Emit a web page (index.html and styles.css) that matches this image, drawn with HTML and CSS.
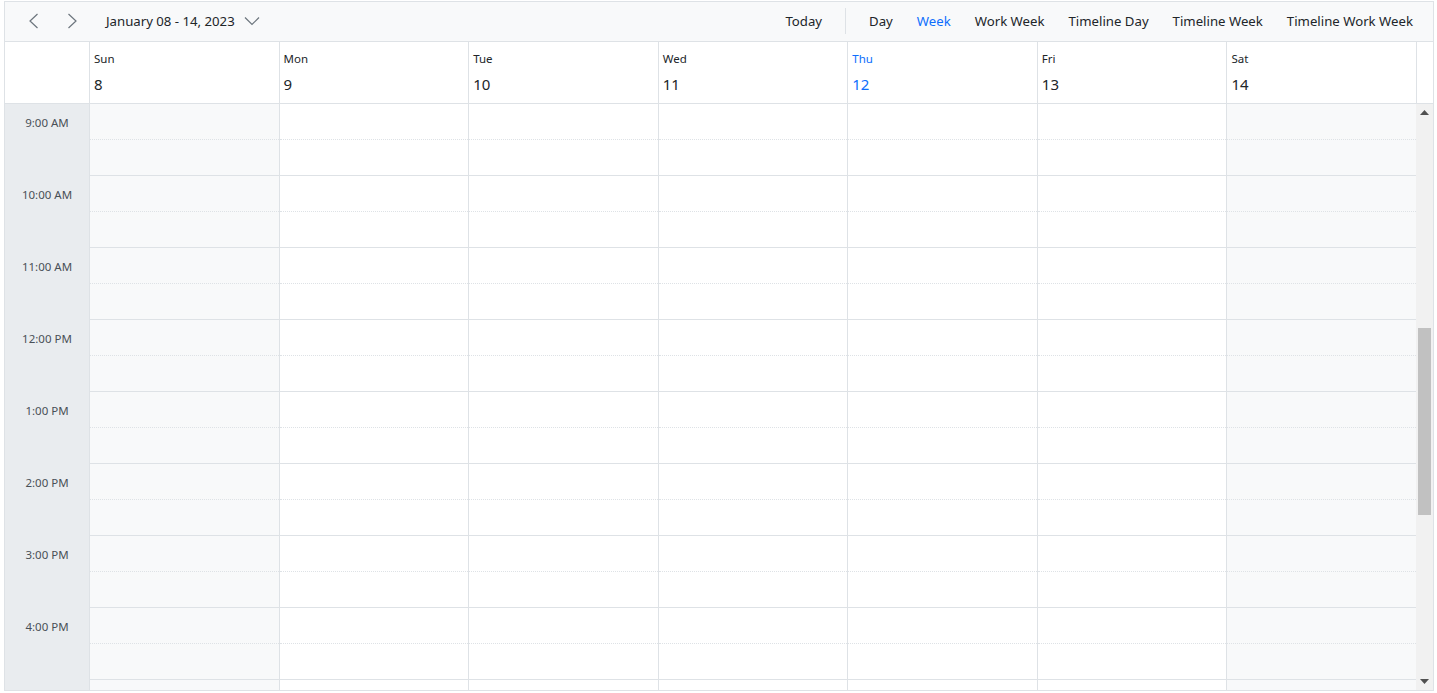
FILE: index.html
```html
<!DOCTYPE html>
<html lang="en">
<head>
<meta charset="utf-8">
<title>Scheduler</title>
<link rel="stylesheet" href="styles.css">
</head>
<body>
<div class="scheduler">
  <div class="toolbar">
    <div class="tb-left">
      <button class="icon-btn" aria-label="Previous">
        <svg width="16" height="16" viewBox="0 0 16 16"><path d="M11.5 1 L4 8 L11.5 15" fill="none" stroke="#6c757d" stroke-width="1.2"/></svg>
      </button>
      <button class="icon-btn" aria-label="Next">
        <svg width="16" height="16" viewBox="0 0 16 16"><path d="M4.5 1 L12 8 L4.5 15" fill="none" stroke="#6c757d" stroke-width="1.2"/></svg>
      </button>
      <button class="date-range">January 08 - 14, 2023
        <svg class="caret" width="16" height="16" viewBox="0 0 16 16"><path d="M1 4.5 L8 11.5 L15 4.5" fill="none" stroke="#6c757d" stroke-width="1.2"/></svg>
      </button>
    </div>
    <div class="tb-right">
      <button class="tb-btn">Today</button>
      <span class="tb-sep"></span>
      <button class="tb-btn">Day</button>
      <button class="tb-btn active">Week</button>
      <button class="tb-btn">Work Week</button>
      <button class="tb-btn">Timeline Day</button>
      <button class="tb-btn">Timeline Week</button>
      <button class="tb-btn">Timeline Work Week</button>
    </div>
  </div>
  <div class="header">
    <div class="corner"></div>
    <div class="day-head"><div class="dname">Sun</div><div class="dnum">8</div></div>
    <div class="day-head"><div class="dname">Mon</div><div class="dnum">9</div></div>
    <div class="day-head"><div class="dname">Tue</div><div class="dnum">10</div></div>
    <div class="day-head"><div class="dname">Wed</div><div class="dnum">11</div></div>
    <div class="day-head today"><div class="dname">Thu</div><div class="dnum">12</div></div>
    <div class="day-head"><div class="dname">Fri</div><div class="dnum">13</div></div>
    <div class="day-head"><div class="dname">Sat</div><div class="dnum">14</div></div>
    <div class="head-spacer"></div>
  </div>
  <div class="body">
    <div class="viewport">
      <div class="grid">
        <div class="time-col">
          <div class="time-slot"><div class="time-label">9:00 AM</div></div>
          <div class="time-slot"><div class="time-label">10:00 AM</div></div>
          <div class="time-slot"><div class="time-label">11:00 AM</div></div>
          <div class="time-slot"><div class="time-label">12:00 PM</div></div>
          <div class="time-slot"><div class="time-label">1:00 PM</div></div>
          <div class="time-slot"><div class="time-label">2:00 PM</div></div>
          <div class="time-slot"><div class="time-label">3:00 PM</div></div>
          <div class="time-slot"><div class="time-label">4:00 PM</div></div>
          <div class="time-slot"></div>
        </div>
        <div class="day-col weekend">
          <div class="hour"><div class="half"></div></div><div class="hour"><div class="half"></div></div><div class="hour"><div class="half"></div></div>
          <div class="hour"><div class="half"></div></div><div class="hour"><div class="half"></div></div><div class="hour"><div class="half"></div></div>
          <div class="hour"><div class="half"></div></div><div class="hour"><div class="half"></div></div><div class="hour"><div class="half"></div></div>
        </div>
        <div class="day-col">
          <div class="hour"><div class="half"></div></div><div class="hour"><div class="half"></div></div><div class="hour"><div class="half"></div></div>
          <div class="hour"><div class="half"></div></div><div class="hour"><div class="half"></div></div><div class="hour"><div class="half"></div></div>
          <div class="hour"><div class="half"></div></div><div class="hour"><div class="half"></div></div><div class="hour"><div class="half"></div></div>
        </div>
        <div class="day-col">
          <div class="hour"><div class="half"></div></div><div class="hour"><div class="half"></div></div><div class="hour"><div class="half"></div></div>
          <div class="hour"><div class="half"></div></div><div class="hour"><div class="half"></div></div><div class="hour"><div class="half"></div></div>
          <div class="hour"><div class="half"></div></div><div class="hour"><div class="half"></div></div><div class="hour"><div class="half"></div></div>
        </div>
        <div class="day-col">
          <div class="hour"><div class="half"></div></div><div class="hour"><div class="half"></div></div><div class="hour"><div class="half"></div></div>
          <div class="hour"><div class="half"></div></div><div class="hour"><div class="half"></div></div><div class="hour"><div class="half"></div></div>
          <div class="hour"><div class="half"></div></div><div class="hour"><div class="half"></div></div><div class="hour"><div class="half"></div></div>
        </div>
        <div class="day-col">
          <div class="hour"><div class="half"></div></div><div class="hour"><div class="half"></div></div><div class="hour"><div class="half"></div></div>
          <div class="hour"><div class="half"></div></div><div class="hour"><div class="half"></div></div><div class="hour"><div class="half"></div></div>
          <div class="hour"><div class="half"></div></div><div class="hour"><div class="half"></div></div><div class="hour"><div class="half"></div></div>
        </div>
        <div class="day-col">
          <div class="hour"><div class="half"></div></div><div class="hour"><div class="half"></div></div><div class="hour"><div class="half"></div></div>
          <div class="hour"><div class="half"></div></div><div class="hour"><div class="half"></div></div><div class="hour"><div class="half"></div></div>
          <div class="hour"><div class="half"></div></div><div class="hour"><div class="half"></div></div><div class="hour"><div class="half"></div></div>
        </div>
        <div class="day-col weekend">
          <div class="hour"><div class="half"></div></div><div class="hour"><div class="half"></div></div><div class="hour"><div class="half"></div></div>
          <div class="hour"><div class="half"></div></div><div class="hour"><div class="half"></div></div><div class="hour"><div class="half"></div></div>
          <div class="hour"><div class="half"></div></div><div class="hour"><div class="half"></div></div><div class="hour"><div class="half"></div></div>
        </div>
      </div>
    </div>
    <div class="scrollbar">
      <div class="sb-arrow"><svg width="9" height="5" viewBox="0 0 9 5"><path d="M0 5 L4.5 0 L9 5 Z" fill="#505050"/></svg></div>
      <div class="sb-track">
        <div class="sb-before"></div>
        <div class="sb-thumb"></div>
      </div>
      <div class="sb-arrow"><svg width="9" height="5" viewBox="0 0 9 5"><path d="M0 0 L4.5 5 L9 0 Z" fill="#505050"/></svg></div>
    </div>
  </div>
</div>
</body>
</html>
```

FILE: styles.css
```css
* { box-sizing: border-box; }
html, body { margin: 0; padding: 0; background: #fff; }
body {
  font-family: "Noto Sans", "Segoe UI", "Liberation Sans", sans-serif;
  color: #212529;
}
button {
  font: inherit;
  color: inherit;
  background: none;
  border: 0;
  padding: 0;
  cursor: pointer;
}
.scheduler {
  margin: 1px 4px 0 4px;
  width: 1430px;
  height: 690px;
  border: 1px solid #dee2e6;
  display: flex;
  flex-direction: column;
  overflow: hidden;
}
.toolbar {
  height: 40px;
  flex: none;
  background: #f8f9fa;
  border-bottom: 1px solid #dee2e6;
  display: flex;
  align-items: center;
  justify-content: space-between;
  font-size: 13.2px;
  padding-bottom: 1px;
}
.tb-left {
  display: flex;
  align-items: center;
  padding-left: 13px;
}
.icon-btn {
  width: 32px;
  height: 32px;
  display: flex;
  align-items: center;
  justify-content: center;
  margin-right: 6px;
}
.date-range {
  display: flex;
  align-items: center;
  margin-left: 12px;
  gap: 9px;
  font-size: 13.2px;
}
.tb-right {
  display: flex;
  align-items: center;
  padding-right: 8px;
}
.tb-btn {
  padding: 0 12px;
  height: 32px;
  font-size: 13.2px;
}
.tb-btn.active { color: #0d6efd; }
.tb-sep {
  width: 1px;
  height: 26px;
  background: #dee2e6;
  margin: 0 11px;
}
.header {
  flex: none;
  height: 62px;
  display: grid;
  grid-template-columns: 84px repeat(7, 1fr) 17px;
  border-bottom: 1px solid #dee2e6;
}
.day-head {
  border-left: 1px solid #dee2e6;
  padding: 9px 0 0 4px;
}
.dname { font-size: 11.5px; line-height: 16px; }
.dnum { font-size: 15px; line-height: 22px; margin-top: 6px; }
.day-head.today { color: #0d6efd; }
.head-spacer { border-left: 1px solid #dee2e6; }
.body {
  flex: 1;
  min-height: 0;
  display: flex;
}
.viewport {
  flex: 1;
  min-width: 0;
  overflow: hidden;
}
.grid {
  display: grid;
  grid-template-columns: 84px repeat(7, 1fr);
}
.time-col { background: #e9ecef; }
.time-slot { height: 72px; }
.time-label {
  height: 37px;
  display: flex;
  align-items: center;
  justify-content: center;
  font-size: 11.5px;
  color: #495057;
}
.day-col { border-left: 1px solid #dee2e6; background: #fff; }
.day-col.weekend { background: #f8f9fa; }
.hour { height: 72px; border-bottom: 1px solid #dee2e6; }
.half { height: 36px; border-bottom: 1px dotted #dee2e6; }
.scrollbar {
  flex: none;
  width: 17px;
  background: #f1f1f1;
  display: flex;
  flex-direction: column;
}
.sb-arrow {
  height: 17px;
  flex: none;
  display: flex;
  align-items: center;
  justify-content: center;
}
.sb-track {
  flex: 1;
  display: flex;
  flex-direction: column;
  padding: 0 2px;
}
.sb-before { height: 207px; flex: none; }
.sb-thumb { height: 187px; flex: none; background: #c1c1c1; }
```
